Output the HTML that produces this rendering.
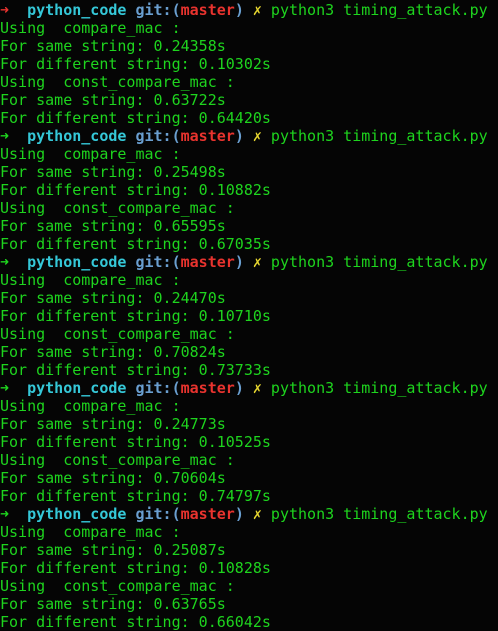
<!DOCTYPE html><html><head><style>
body{margin:0;background:#050505;width:498px;height:629px;overflow:hidden}
pre{margin:0;padding:1px 0 0 0;font-family:"DejaVu Sans Mono",monospace;font-size:15px;line-height:18px;color:#1ed41e}
.r{color:#e8332e;font-weight:bold}.a{color:#1ed41e;font-weight:bold}.c{color:#35c8d8;font-weight:bold}.b{color:#6a9fd0;font-weight:bold}.m{color:#e8332e;font-weight:bold}.y{color:#e8d830}
</style></head><body><pre><span class="r">➜</span>  <span class="c">python_code</span> <span class="b">git:(</span><span class="m">master</span><span class="b">)</span> <span class="y">✗</span> python3 timing_attack.py
Using  compare_mac :
For same string: 0.24358s
For different string: 0.10302s
Using  const_compare_mac :
For same string: 0.63722s
For different string: 0.64420s
<span class="a">➜</span>  <span class="c">python_code</span> <span class="b">git:(</span><span class="m">master</span><span class="b">)</span> <span class="y">✗</span> python3 timing_attack.py
Using  compare_mac :
For same string: 0.25498s
For different string: 0.10882s
Using  const_compare_mac :
For same string: 0.65595s
For different string: 0.67035s
<span class="a">➜</span>  <span class="c">python_code</span> <span class="b">git:(</span><span class="m">master</span><span class="b">)</span> <span class="y">✗</span> python3 timing_attack.py
Using  compare_mac :
For same string: 0.24470s
For different string: 0.10710s
Using  const_compare_mac :
For same string: 0.70824s
For different string: 0.73733s
<span class="a">➜</span>  <span class="c">python_code</span> <span class="b">git:(</span><span class="m">master</span><span class="b">)</span> <span class="y">✗</span> python3 timing_attack.py
Using  compare_mac :
For same string: 0.24773s
For different string: 0.10525s
Using  const_compare_mac :
For same string: 0.70604s
For different string: 0.74797s
<span class="a">➜</span>  <span class="c">python_code</span> <span class="b">git:(</span><span class="m">master</span><span class="b">)</span> <span class="y">✗</span> python3 timing_attack.py
Using  compare_mac :
For same string: 0.25087s
For different string: 0.10828s
Using  const_compare_mac :
For same string: 0.63765s
For different string: 0.66042s</pre></body></html>
